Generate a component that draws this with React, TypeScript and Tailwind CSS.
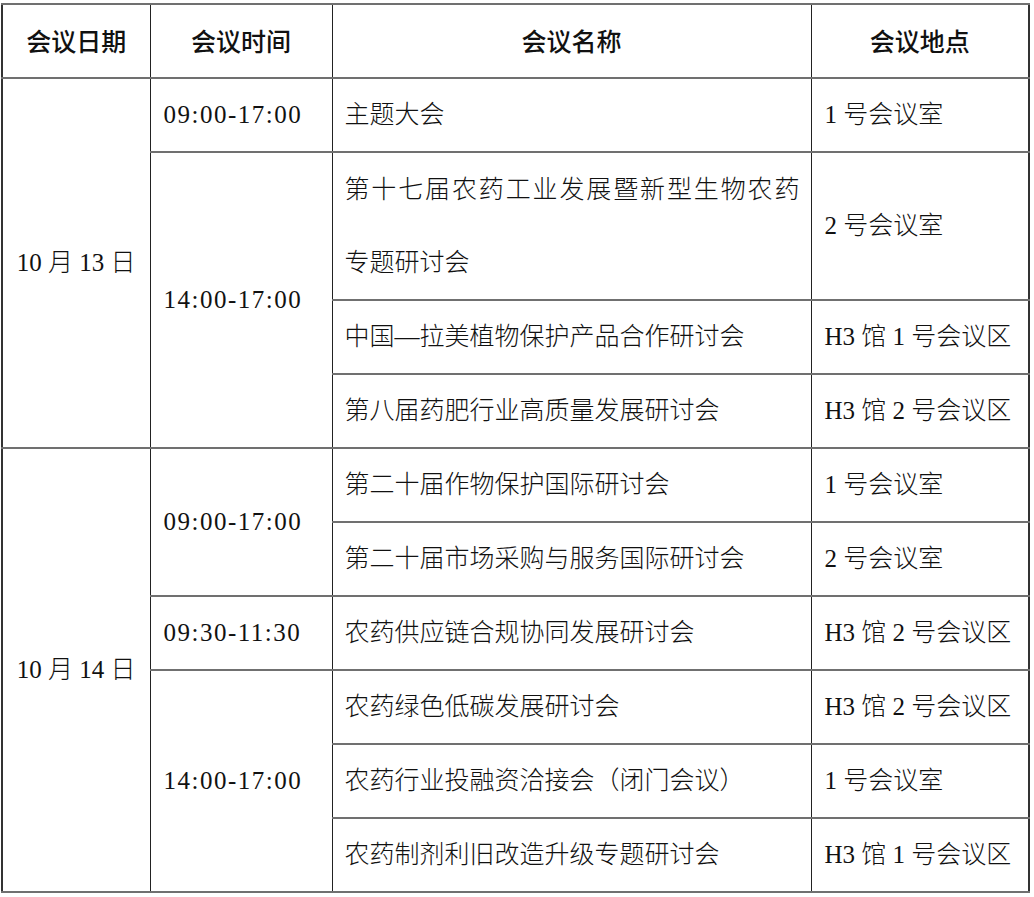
import React from "react";

const body = "font-['Liberation_Serif','Noto_Sans_CJK_SC',serif] font-light text-[25px] text-[#111]";
const head = "font-['Noto_Sans_CJK_SC',sans-serif] font-medium text-[25px] text-[#111]";
const cellB = "border-y-2 border-y-[#707070] border-x border-x-[#222] align-middle p-0";
const timeCls = "pl-[13px] tracking-[1.5px] text-left whitespace-nowrap";
const nameCls = "pl-[12px] text-left whitespace-nowrap";
const locCls = "pl-[13px] text-left whitespace-nowrap";

export default function App() {
  return (
    <div className="bg-white w-[1034px] h-[897px] pt-[3px] pl-[1px]">
      <table className={`border-collapse table-fixed w-[1027px] border-2 border-[#333] ${body}`}>
        <colgroup>
          <col className="w-[148px]" />
          <col className="w-[182px]" />
          <col className="w-[479px]" />
          <col className="w-[218px]" />
        </colgroup>
        <tbody>
          <tr className="h-[74px]">
            <th className={`${cellB} ${head} text-center`}>会议日期</th>
            <th className={`${cellB} ${head} text-center`}>会议时间</th>
            <th className={`${cellB} ${head} text-center`}>会议名称</th>
            <th className={`${cellB} ${head} text-center`}>会议地点</th>
          </tr>
          <tr className="h-[74px]">
            <td rowSpan={4} className={`${cellB} text-center whitespace-nowrap`}>10 月 13 日</td>
            <td className={`${cellB} ${timeCls}`}>09:00-17:00</td>
            <td className={`${cellB} ${nameCls}`}>主题大会</td>
            <td className={`${cellB} ${locCls}`}>1 号会议室</td>
          </tr>
          <tr className="h-[147px]">
            <td rowSpan={3} className={`${cellB} ${timeCls}`}>14:00-17:00</td>
            <td className={`${cellB} pl-[12px] pr-[11px]`}>
              <div className="leading-[73px] text-justify [text-align-last:justify] whitespace-nowrap">第十七届农药工业发展暨新型生物农药</div>
              <div className="leading-[73px] text-left">专题研讨会</div>
            </td>
            <td className={`${cellB} ${locCls}`}>2 号会议室</td>
          </tr>
          <tr className="h-[74px]">
            <td className={`${cellB} ${nameCls}`}>中国—拉美植物保护产品合作研讨会</td>
            <td className={`${cellB} ${locCls}`}>H3 馆 1 号会议区</td>
          </tr>
          <tr className="h-[74px]">
            <td className={`${cellB} ${nameCls}`}>第八届药肥行业高质量发展研讨会</td>
            <td className={`${cellB} ${locCls}`}>H3 馆 2 号会议区</td>
          </tr>
          <tr className="h-[74px]">
            <td rowSpan={6} className={`${cellB} text-center whitespace-nowrap`}>10 月 14 日</td>
            <td rowSpan={2} className={`${cellB} ${timeCls}`}>09:00-17:00</td>
            <td className={`${cellB} ${nameCls}`}>第二十届作物保护国际研讨会</td>
            <td className={`${cellB} ${locCls}`}>1 号会议室</td>
          </tr>
          <tr className="h-[74px]">
            <td className={`${cellB} ${nameCls}`}>第二十届市场采购与服务国际研讨会</td>
            <td className={`${cellB} ${locCls}`}>2 号会议室</td>
          </tr>
          <tr className="h-[74px]">
            <td className={`${cellB} ${timeCls}`}>09:30-11:30</td>
            <td className={`${cellB} ${nameCls}`}>农药供应链合规协同发展研讨会</td>
            <td className={`${cellB} ${locCls}`}>H3 馆 2 号会议区</td>
          </tr>
          <tr className="h-[74px]">
            <td rowSpan={3} className={`${cellB} ${timeCls}`}>14:00-17:00</td>
            <td className={`${cellB} ${nameCls}`}>农药绿色低碳发展研讨会</td>
            <td className={`${cellB} ${locCls}`}>H3 馆 2 号会议区</td>
          </tr>
          <tr className="h-[74px]">
            <td className={`${cellB} ${nameCls}`}>农药行业投融资洽接会（闭门会议）</td>
            <td className={`${cellB} ${locCls}`}>1 号会议室</td>
          </tr>
          <tr className="h-[74px]">
            <td className={`${cellB} ${nameCls}`}>农药制剂利旧改造升级专题研讨会</td>
            <td className={`${cellB} ${locCls}`}>H3 馆 1 号会议区</td>
          </tr>
        </tbody>
      </table>
    </div>
  );
}
